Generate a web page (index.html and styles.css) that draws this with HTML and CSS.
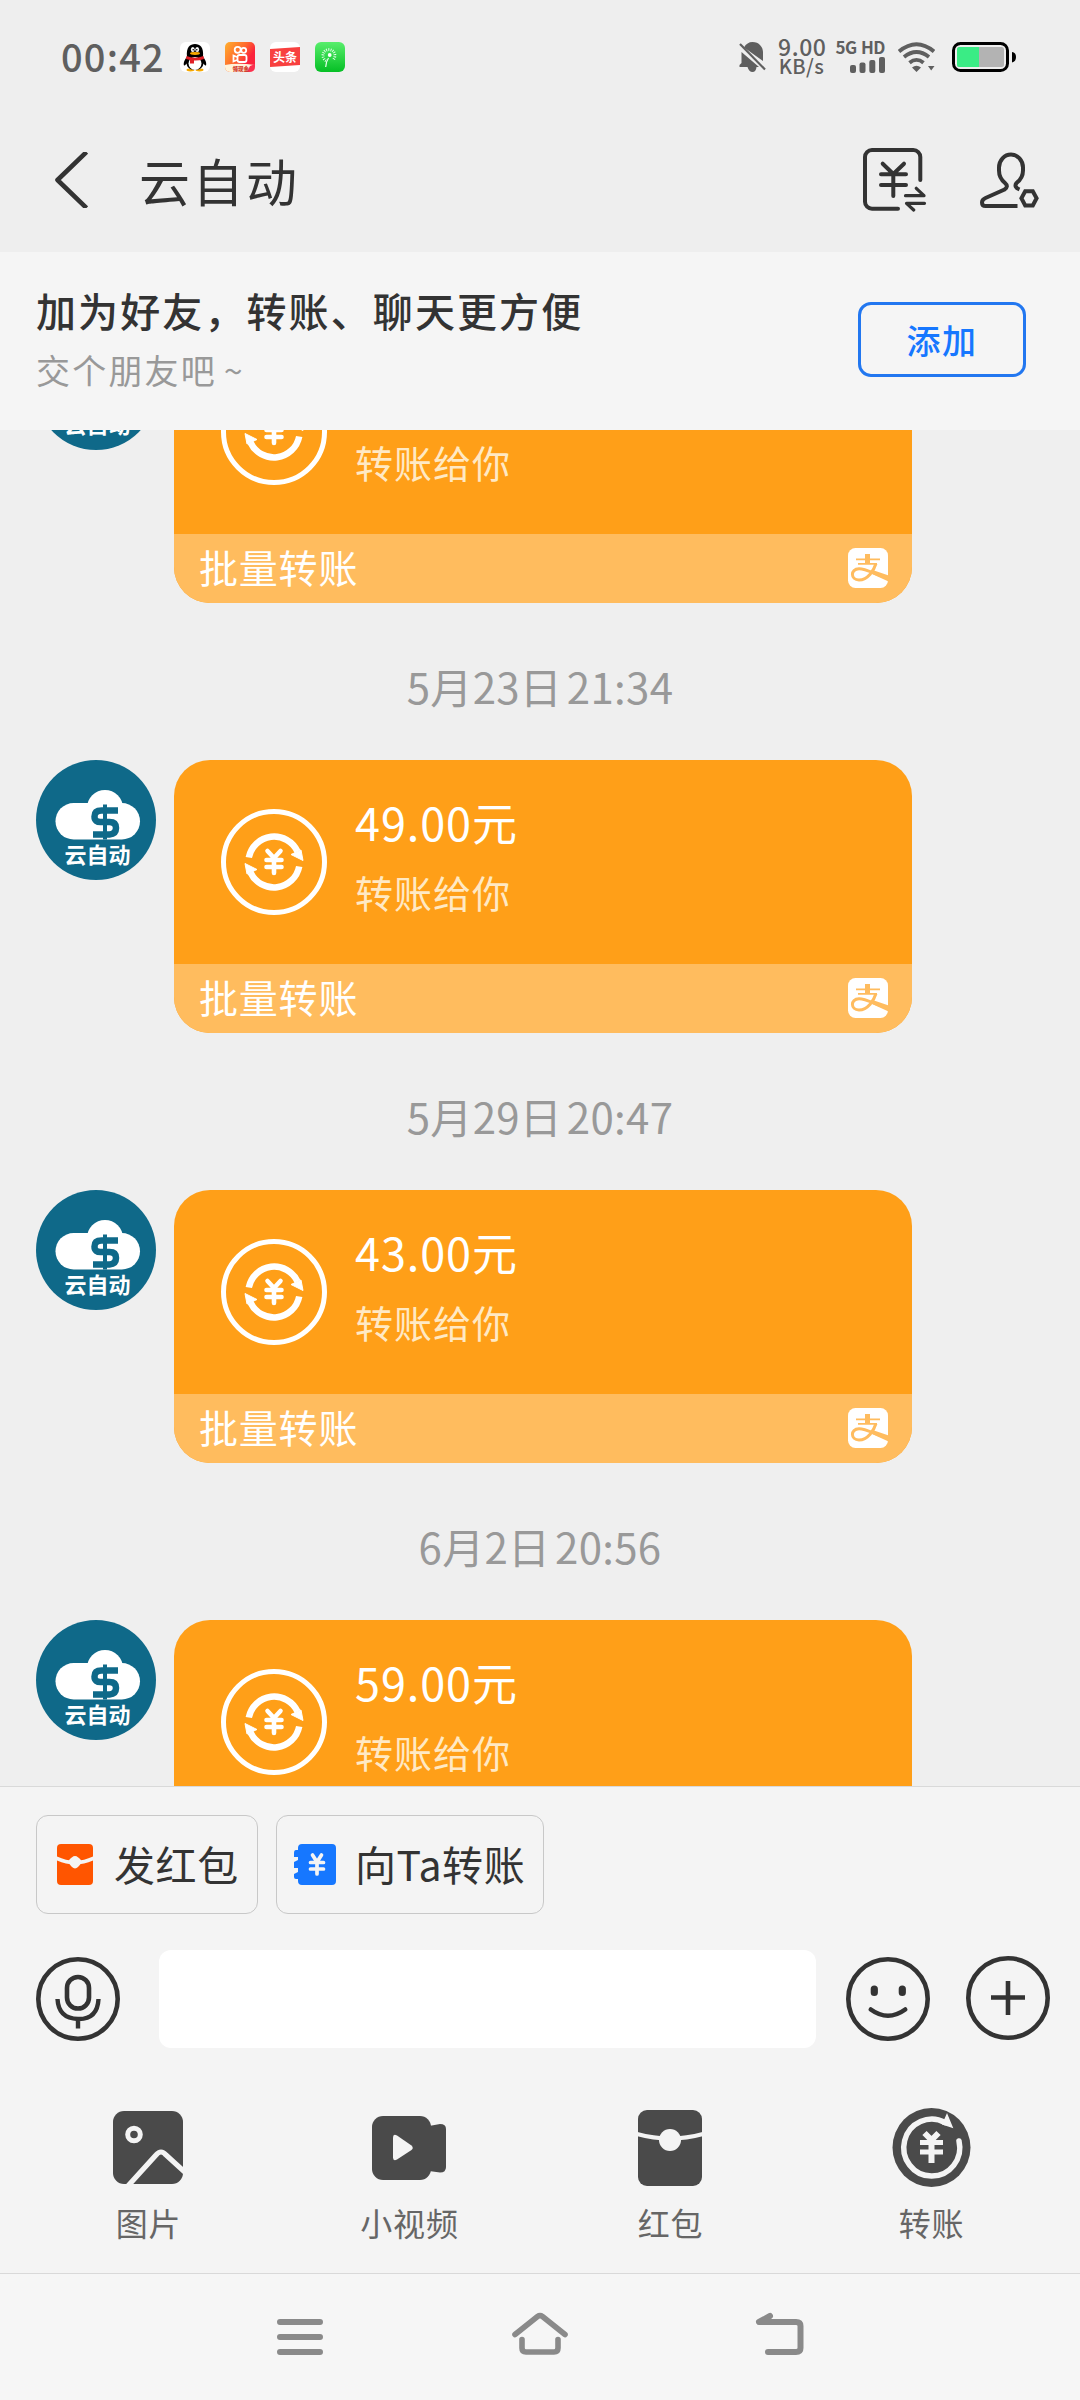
FILE: index.html
```html
<!DOCTYPE html>
<html lang="zh-CN">
<head>
<meta charset="utf-8">
<title>云自动</title>
<link rel="stylesheet" href="styles.css">
</head>
<body>
<svg class="defs" width="0" height="0" aria-hidden="true">
  <symbol id="avatar" viewBox="0 0 120 120">
    <circle cx="60" cy="60" r="60" fill="#0f6989"/>
    <rect x="19.5" y="43" width="84.5" height="36.5" rx="18.2" fill="#fff"/>
    <circle cx="69" cy="48" r="18" fill="#fff"/>
    <path d="M82 50.500H65.500Q58.500 50.500 58.500 56.500T65.500 62H73.500Q80 62 80 68T73.500 74.500H57" fill="none" stroke="#0f6989" stroke-width="6.500"/>
    <path d="M69 44.500V79.500" stroke="#0f6989" stroke-width="4"/>
    <text x="61.500" y="102.500" text-anchor="middle" font-size="22" font-weight="700" fill="#fff">云自动</text>
  </symbol>
  <symbol id="transfer" viewBox="0 0 106 106">
    <g fill="none" stroke="#fff">
      <circle cx="53" cy="53" r="50.500" stroke-width="5"/>
      <path d="M27.800 48.500A25.800 25.800 0 0 1 76.500 42.500M78.200 57.500A25.800 25.800 0 0 1 29.500 63.500" stroke-width="6.500"/>
      <path d="M46.500 42L53 49L59.500 42M45.500 51H60.500M45.500 58H60.500M53 50V64" stroke-width="4.600" stroke-linecap="round" stroke-linejoin="round"/>
    </g>
    <path d="M82 51.500L70 45.500L80 41ZM24 54.500L36 60.500L26 65Z" fill="#fff" stroke="#fff" stroke-linejoin="round"/>
  </symbol>
  <symbol id="alipay" viewBox="0 0 40 40">
    <rect width="40" height="40" rx="7.500" fill="#fff"/>
    <path d="M8 11.300H32M10 15.800H29" fill="none" stroke="#ffbc5e" stroke-width="1.800"/>
    <path d="M19.500 6V16" stroke="#ffbc5e" stroke-width="5"/>
    <path d="M28 15.500C26 22 20 32 11 32C2.500 32 2 21 11 20.800C18 20.500 28 27 40 30" fill="none" stroke="#ffbc5e" stroke-width="3"/>
    <path d="M26 22.500L40 27.200V33.300L23.500 25.800Z" fill="#ffbc5e"/>
  </symbol>
</svg>

<div class="screen">
  <header class="status">
    <span class="clock">00:42</span>
    <div class="apps">
      <svg viewBox="0 0 30 30"><rect width="30" height="30" rx="6" fill="#fff"/><ellipse cx="10.500" cy="28" rx="4" ry="1.400" fill="#f6a800"/><ellipse cx="19.500" cy="28" rx="4" ry="1.400" fill="#f6a800"/><path d="M7 15C6 5 10 2 15 2S24 5 23 15C25 17 27 21 26 23.500C25 24 24 22 23.500 21.500C23 26 19 28 15 28S7 26 6.500 21.500C6 22 5 24 4 23.500C3 21 5 17 7 15Z"/><ellipse cx="15" cy="21.500" rx="6.500" ry="6.500" fill="#fff"/><ellipse cx="12.800" cy="7.500" rx="1.900" ry="2.500" fill="#fff"/><ellipse cx="17.200" cy="7.500" rx="1.900" ry="2.500" fill="#fff"/><circle cx="13.200" cy="7.800" r=".8"/><circle cx="16.800" cy="7.800" r=".8"/><ellipse cx="15" cy="11.500" rx="5" ry="1.400" fill="#f6a800"/><path d="M6.500 14Q15 17.500 23.500 14L24 17Q18 19 14 18.500V21.500H10V18L6 17Z" fill="#e01f26"/></svg>
      <svg viewBox="0 0 30 30"><defs><linearGradient id="ks" x2="1" y2=".7"><stop stop-color="#ffb02e"/><stop offset=".5" stop-color="#ff6a2c"/><stop offset=".8" stop-color="#fb233c"/></linearGradient></defs><rect width="30" height="30" rx="5" fill="url(#ks)"/><path d="M0 23Q12 20.500 30 23V25A5 5 0 0 1 25 30H5A5 5 0 0 1 0 25Z" fill="#fff3da"/><path d="M25 24L30 22V25A5 5 0 0 1 25 30H22Z" fill="#fb3050"/><g fill="none" stroke="#fff" stroke-width="1.800"><circle cx="12.700" cy="7.800" r="3"/><circle cx="18.700" cy="8.300" r="2.500"/><rect x="12.500" y="13" width="9" height="7" rx="2"/><path d="M12 15L8.500 13.500V19.500L12 18"/></g><text x="7.500" y="28.800" font-size="5.500" font-weight="900" fill="#d33c2c">领现金</text></svg>
      <svg viewBox="0 0 30 30"><rect width="30" height="30" rx="6" fill="#fff"/><path d="M0 7L30 5V23L0 25Z" fill="#f8403f"/><text x="15" y="19.500" text-anchor="middle" font-size="12" font-weight="700" fill="#fff">头条</text></svg>
      <svg viewBox="0 0 30 30"><defs><linearGradient id="gr" x2="0" y2="1"><stop stop-color="#58ee6c"/><stop offset="1" stop-color="#05bf25"/></linearGradient></defs><rect width="30" height="30" rx="6" fill="url(#gr)"/><path d="M11 18.800A6 6 0 1 1 18 18" fill="none" stroke="#eafff0" stroke-width="2.800" stroke-dasharray=".9 1.200"/><circle cx="14.700" cy="13" r="1.900" fill="#fff"/><path d="M13.500 16Q11 19.500 10.700 25" fill="none" stroke="#eafff0" stroke-width="1.200"/></svg>
    </div>
    <div class="signals">
      <svg class="bell" viewBox="0 0 27 30"><path d="M5 5.500Q8 0 13.500 0C20 0 24 5 24 10V19ZM2.500 10L20 25H17.500Q17 30 13.500 30T8.500 25H.5V23L2.500 21Z" fill="#5f5f5f"/><path d="M1 2L26 27.500" stroke="#5f5f5f" stroke-width="2.200"/></svg>
      <div class="speed"><b>9.00</b><span>KB/s</span></div>
      <div class="cell"><b>5G HD</b><svg viewBox="0 0 35 16"><g fill="#5f5f5f"><rect y="8" width="6" height="8" rx="2"/><rect x="9.500" y="5.500" width="6" height="10.500" rx="2"/><rect x="19.300" y="3" width="6" height="13" rx="2"/><rect x="29" width="6" height="16" rx="2"/></g></svg></div>
      <svg class="wifi" viewBox="0 0 37 30"><g fill="none" stroke="#5f5f5f" stroke-width="3.800"><path d="M1 9.500Q18.500-5 36 9.500M6 15Q18.500 5 31 15M11.500 20.800Q18.500 15 25.500 20.800"/></g><path d="M14 25.500Q18.500 22 23 25.500L18.500 30ZM30 24H36.500L33.200 28.500Z" fill="#5f5f5f"/></svg>
      <svg class="battery" viewBox="0 0 65 30"><rect x="1.500" y="1.500" width="54" height="27" rx="7" fill="none" stroke="#000" stroke-width="3"/><rect x="5" y="5" width="47" height="20" rx="2.500" fill="#b3b3b3"/><path d="M27 5H7.500A2.500 2.500 0 0 0 5 7.500V22.500A2.500 2.500 0 0 0 7.500 25H27Z" fill="#3aec85"/><path d="M60 10Q64 10.500 64 15T60 20.500Z"/></svg>
    </div>
  </header>

  <nav class="titlebar">
    <svg class="back" viewBox="0 0 33 56"><path d="M31.500 0L2.500 28L31.500 56" fill="none" stroke="#333" stroke-width="4.600" stroke-linejoin="round"/></svg>
    <h1>云自动</h1>
    <svg class="bill" viewBox="0 0 64 64"><g fill="none" stroke="#333" stroke-width="4" stroke-linecap="round" stroke-linejoin="round"><path d="M57.300 32V9A7 7 0 0 0 50.300 2H9A7 7 0 0 0 2 9V53.700A7 7 0 0 0 9 60.700H35"/><path d="M19.700 15.700L30.300 26L41 15.700M18 26.300H43M18 37H43M30.300 26V48"/><path d="M42.500 47.700H61L53.300 40.300M61.500 55.300H43.500L50.700 62" stroke-width="3.200"/></g></svg>
    <svg class="person" viewBox="0 0 60 56"><g fill="none" stroke="#333" stroke-width="4"><path d="M37.500 54H5.500Q2 54 2 50.500Q2 47.500 5.500 46L24.500 37.500Q29 34.500 25 31Q19 26 19 18.500V15.500A12 13 0 0 1 43 15.500V18.500Q43 26 36.500 31Q33.500 35 39.500 37.500"/><path d="M45.200 39.200H52.800L56.600 46.300L52.800 53.500H45.200L41.400 46.300Z"/></g></svg>
  </nav>

  <section class="banner">
    <div><h2>加为好友，转账、聊天更方便</h2><p>交个朋友吧 ~</p></div>
    <button class="add">添加</button>
  </section>

  <main class="chat">
    <article class="message">
      <svg class="avatar"><use href="#avatar"/></svg>
      <div class="card">
        <div class="body"><svg class="coin"><use href="#transfer"/></svg><div><strong>47.00元</strong><span>转账给你</span></div></div>
        <div class="foot"><span>批量转账</span><svg><use href="#alipay"/></svg></div>
      </div>
    </article>
    <time>5月23日 21:34</time>
    <article class="message">
      <svg class="avatar"><use href="#avatar"/></svg>
      <div class="card">
        <div class="body"><svg class="coin"><use href="#transfer"/></svg><div><strong>49.00元</strong><span>转账给你</span></div></div>
        <div class="foot"><span>批量转账</span><svg><use href="#alipay"/></svg></div>
      </div>
    </article>
    <time>5月29日 20:47</time>
    <article class="message">
      <svg class="avatar"><use href="#avatar"/></svg>
      <div class="card">
        <div class="body"><svg class="coin"><use href="#transfer"/></svg><div><strong>43.00元</strong><span>转账给你</span></div></div>
        <div class="foot"><span>批量转账</span><svg><use href="#alipay"/></svg></div>
      </div>
    </article>
    <time>6月2日 20:56</time>
    <article class="message">
      <svg class="avatar"><use href="#avatar"/></svg>
      <div class="card">
        <div class="body"><svg class="coin"><use href="#transfer"/></svg><div><strong>59.00元</strong><span>转账给你</span></div></div>
        <div class="foot"><span>批量转账</span><svg><use href="#alipay"/></svg></div>
      </div>
    </article>
  </main>

  <section class="panel">
    <div class="chips">
      <div class="chip red"><svg viewBox="0 0 36 41"><rect width="36" height="41" rx="4" fill="#ff5500"/><path d="M-1 14Q18 23 37 14" fill="none" stroke="#f4f4f4" stroke-width="3.600"/><path d="M11 17.500Q15 12 18 12T25 17.500Q21 24.500 18 24.500T11 17.500" fill="#f4f4f4"/></svg><span>发红包</span></div>
      <div class="chip blue"><svg viewBox="0 0 42 41"><path d="M8 0H38A4 4 0 0 1 42 4V37A4 4 0 0 1 38 41H8A4 4 0 0 1 4 37V35H2Q0 35 0 33V30L4 28V24H0V18L4 16V13H0V9Q0 6 2 6H4V4A4 4 0 0 1 8 0Z" fill="#1677ff"/><path d="M18.500 11L23 18L27.500 11M16.500 18.500H29.500M16.500 25H29.500M23 18V30" fill="none" stroke="#f4f4f4" stroke-width="3.700" stroke-linecap="round"/></svg><span>向Ta转账</span></div>
    </div>
    <div class="compose">
      <svg viewBox="0 0 84 84"><g fill="none" stroke="#333"><circle cx="42" cy="42" r="39.700" stroke-width="4.600"/><rect x="31" y="20" width="22" height="31.500" rx="11" stroke-width="4.600"/><path d="M21.500 42Q22.500 61.500 42 62T62.500 42M42 62V71.500" stroke-width="4.400"/></g></svg>
      <input class="entry" aria-label="消息">
      <svg viewBox="0 0 84 84"><g fill="none" stroke="#333" stroke-linecap="round"><circle cx="42" cy="42" r="39.700" stroke-width="4.600"/><path d="M28.300 32V35.500M56.300 32V35.500" stroke-width="7.200"/><path d="M24.800 52.500Q42 65 59.200 52.500" stroke-width="4.600"/></g></svg>
      <svg class="plus" viewBox="0 0 84 84"><g fill="none" stroke="#333"><circle cx="42" cy="42" r="39.700" stroke-width="4.600"/><path d="M25 41.500H59M42 25V59" stroke-width="4.600"/></g></svg>
    </div>
    <div class="tools">
      <div class="tool"><svg viewBox="0 0 80 80"><rect x="5" y="4" width="70" height="73" rx="11" fill="#4a4a4a"/><circle cx="26" cy="27.500" r="6.300" fill="none" stroke="#f4f4f4" stroke-width="5"/><path d="M19 80L48 48Q53 42 58 48L79 67" fill="none" stroke="#f4f4f4" stroke-width="5.200"/></svg><span>图片</span></div>
      <div class="tool"><svg viewBox="0 0 80 80"><rect x="3" y="9" width="59" height="64" rx="11" fill="#4a4a4a"/><path d="M60 19L71 17Q77 17 77 22V60Q77 65.500 71 65.500L60 64Z" fill="#4a4a4a"/><path d="M24 30.500V50.500Q24 54.500 28 52.500L42.500 43Q45 41 42.500 38.500L28 28.500Q24 26.500 24 30.500" fill="#f4f4f4"/></svg><span>小视频</span></div>
      <div class="tool"><svg viewBox="0 0 80 80"><rect x="8" y="3" width="64" height="76" rx="9" fill="#4a4a4a"/><path d="M7 27Q40 36 73 27" fill="none" stroke="#f4f4f4" stroke-width="4.400"/><circle cx="40" cy="33" r="11" fill="#f4f4f4"/></svg><span>红包</span></div>
      <div class="tool"><svg viewBox="0 0 80 80"><ellipse cx="40.500" cy="40.500" rx="39" ry="39.500" fill="#4a4a4a"/><g fill="none" stroke="#f4f4f4"><path d="M68 34A28 28.500 0 1 1 54 15.500" stroke-width="5.500" stroke-linecap="round"/><path d="M33.500 26L40.500 33L47.500 26" stroke-width="6"/><path d="M29 35.500H52M29 45H52" stroke-width="5"/><path d="M40.500 32V56" stroke-width="6"/></g><path d="M56 8L61 20L52 17Z" fill="#f4f4f4" stroke="#f4f4f4" stroke-width="1.500"/></svg><span>转账</span></div>
    </div>
  </section>

  <footer class="system">
    <svg viewBox="0 0 60 50"><path d="M10 10H50M10 25H50M10 40H50" stroke="#8a8a8a" stroke-width="6" stroke-linecap="round"/></svg>
    <svg viewBox="0 0 60 50"><path d="M5 22.500L27.500 4.500Q30 2.700 32.500 4.500L55 22.500M12 27.500V36Q12 40 16 40H44Q48 40 48 36V27.500" fill="none" stroke="#8a8a8a" stroke-width="5.600" stroke-linecap="round"/></svg>
    <svg viewBox="0 0 60 50"><path d="M20 4L9 10H46Q50.500 10 50.500 14V36Q50.500 40 46 40H18" fill="none" stroke="#8a8a8a" stroke-width="6" stroke-linecap="round" stroke-linejoin="round"/></svg>
  </footer>
</div>
</body>
</html>
```
FILE: styles.css
```css
* { box-sizing: border-box; margin: 0; padding: 0; }
body { width: 1080px; height: 2400px; overflow: hidden; font-family: "Noto Sans CJK SC", sans-serif; color: #333; background: #eee; }
svg { display: block; flex: none; }
.defs { position: absolute; }
.screen { display: flex; flex-direction: column; height: 2400px; }

.status { height: 108px; padding: 6px 63px 0 61px; display: flex; align-items: center; background: #eee; color: #5f5f5f; }
.clock { width: 119px; font-size: 38px; line-height: 56px; margin-top: -3px; font-weight: 500; letter-spacing: 1.2px; white-space: nowrap; }
.apps { display: flex; gap: 15px; }
.apps svg { width: 30px; height: 30px; }
.signals { display: flex; align-items: center; margin-left: auto; }
.bell { width: 27px; height: 30px; margin-right: 12px; }
.speed { width: 47px; margin: -2px 13px 0 0; text-align: center; display: flex; flex-direction: column; white-space: nowrap; }
.speed b { font-size: 23px; line-height: 19px; font-weight: 500; letter-spacing: .6px; }
.speed span { font-size: 20px; line-height: 19px; font-weight: 500; letter-spacing: .4px; }
.cell { width: 47px; margin-right: 13px; display: flex; flex-direction: column; align-items: flex-end; }
.cell b { margin-top: -3px; font-size: 17px; line-height: 18px; font-weight: 700; letter-spacing: -.5px; word-spacing: 1px; white-space: nowrap; }
.cell svg { width: 35px; height: 16px; margin-top: 1px; }
.wifi { width: 37px; height: 30px; margin-right: 17px; }
.battery { width: 65px; height: 30px; }

.titlebar { height: 144px; padding: 0 40px 0 55px; display: flex; align-items: center; background: #eee; }
.back { width: 33px; height: 56px; margin-right: 51px; }
h1 { font-size: 51px; line-height: 60px; font-weight: 400; letter-spacing: 2.5px; margin-right: auto; }
.bill { width: 64px; height: 64px; margin-right: 53px; }
.person { width: 60px; height: 56px; }

.banner { height: 178px; padding: 0 54px 3px 36px; display: flex; align-items: center; justify-content: space-between; background: #f5f5f5; }
h2 { font-size: 40px; line-height: 60px; font-weight: 500; letter-spacing: 2.1px; }
.banner p { font-size: 34px; line-height: 60px; letter-spacing: 2.2px; word-spacing: -3px; color: #999; white-space: nowrap; }
.add { width: 168px; height: 75px; border: 3px solid #2277f0; border-radius: 13px; background: none; color: #1677ff; font: 500 34px/60px "Noto Sans CJK SC", sans-serif; letter-spacing: 1.5px; }

.chat { height: 1356px; overflow: hidden; background: #efefef; }
.message { display: flex; gap: 18px; padding-left: 36px; height: 273px; }
.message:first-child { margin-top: -100px; }
.avatar { width: 120px; height: 120px; }
.card { width: 738px; height: 273px; border-radius: 36px; overflow: hidden; background: #ff9f18; color: #fff; }
.body { height: 204px; padding: 0 47px; display: flex; align-items: center; gap: 28px; }
.body div { margin-top: -11px; }
.coin { width: 106px; height: 106px; }
.body strong { display: block; font-size: 45px; line-height: 70px; font-weight: 400; letter-spacing: .9px; }
.body span { display: block; font-size: 38px; line-height: 70px; letter-spacing: 1px; color: #ffe9c4; }
.foot { height: 69px; padding: 0 24px 0 25px; display: flex; align-items: center; justify-content: space-between; background: #ffbc5e; font-size: 39px; line-height: 60px; letter-spacing: .8px; }
.foot span { margin-top: -6px; }
.foot svg { width: 40px; height: 40px; margin-top: -2px; }
time { display: block; height: 157px; padding-top: 8px; line-height: 149px; text-align: center; font-size: 42px; letter-spacing: .3px; word-spacing: -5px; color: #999; }

.panel { height: 488px; border-top: 1px solid #d9d9d9; border-bottom: 1px solid #d9d9d9; background: #f4f4f4; }
.chips { display: flex; gap: 18px; padding: 28px 36px 0; }
.chip { height: 99px; border: 1px solid #c8c8c8; border-radius: 12px; display: flex; align-items: center; font-size: 41px; line-height: 60px; letter-spacing: .6px; white-space: nowrap; }
.chip span { margin-top: -3px; }
.red { width: 222px; padding-left: 20px; gap: 21px; }
.blue { width: 268px; padding-left: 17px; gap: 19px; }
.red svg { width: 36px; height: 41px; }
.blue svg { width: 42px; height: 41px; }
.compose { height: 98px; margin-top: 36px; padding: 0 30px 0 36px; display: flex; align-items: center; }
.compose svg { width: 84px; height: 84px; }
.entry { width: 657px; height: 98px; margin: 0 30px 0 39px; border: 0; border-radius: 12px; background: #fff; }
.compose .plus { margin: -2px 0 0 36px; }
.tools { display: grid; grid-template-columns: repeat(4, 261px); padding: 59px 18px 0; }
.tool { display: flex; flex-direction: column; align-items: center; font-size: 32px; line-height: 50px; color: #666; letter-spacing: .8px; }
.tool svg { width: 80px; height: 80px; margin: 0 2px 10px 0; }

.system { height: 126px; padding: 38px 270px 0; display: flex; gap: 180px; background: #f6f6f6; }
.system svg { width: 60px; height: 50px; }
```
